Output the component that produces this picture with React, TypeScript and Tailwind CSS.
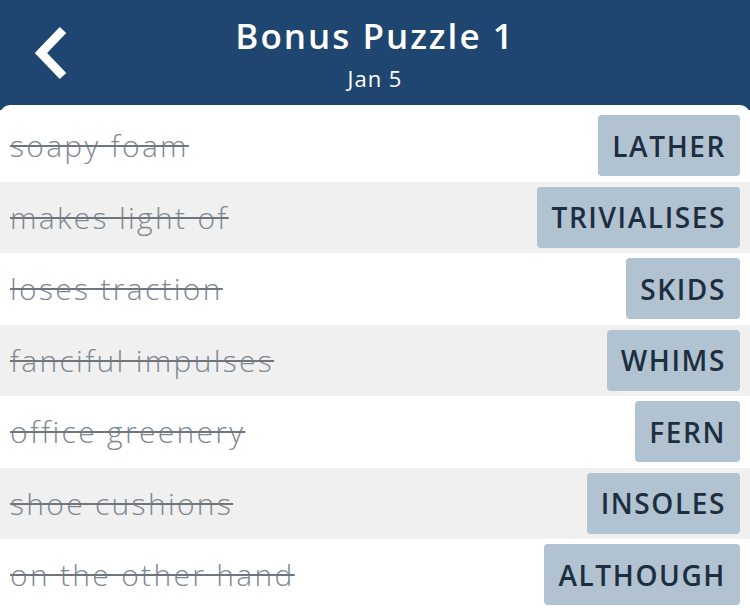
const clues = [
  { clue: "soapy foam", answer: "LATHER" },
  { clue: "makes light of", answer: "TRIVIALISES" },
  { clue: "loses traction", answer: "SKIDS" },
  { clue: "fanciful impulses", answer: "WHIMS" },
  { clue: "office greenery", answer: "FERN" },
  { clue: "shoe cushions", answer: "INSOLES" },
  { clue: "on the other hand", answer: "ALTHOUGH" },
];

export default function App() {
  return (
    <div className="h-[611px] w-[750px] overflow-hidden bg-[#1f4671] font-['Open_Sans',sans-serif]">
      <header className="relative flex h-[105px] flex-col items-center pt-[12px] text-white">
        <button className="absolute left-[30px] top-[24px]">
          <svg width="44" height="60" viewBox="0 0 44 60">
            <path
              d="M33 6 L11 29 L33 52"
              fill="none"
              stroke="white"
              strokeWidth="9"
              strokeLinecap="butt"
              strokeLinejoin="miter"
            />
          </svg>
        </button>
        <h1 className="text-[35px] font-semibold leading-[48px] tracking-[2px]">Bonus Puzzle 1</h1>
        <p className="mt-[3px] text-[22px] leading-[30px] tracking-[1px]">Jan 5</p>
      </header>
      <main className="rounded-t-[10px] bg-white pt-[5px]">
        {clues.map((c, i) => (
          <div
            key={c.clue}
            className={`flex h-[71.5px] items-center justify-between px-[10px] ${i % 2 === 1 ? "bg-[#f0f0f0]" : "bg-white"}`}
          >
            <span className="text-[30px] font-light tracking-[2.3px] text-[#7f878f] line-through decoration-[#6f767d] decoration-[1.5px]">
              {c.clue}
            </span>
            <span className="flex h-[61px] items-center rounded-[4px] bg-[#b1c2d1] px-[14px] text-[28px] font-semibold tracking-[1.6px] text-[#1d2e40]">
              {c.answer}
            </span>
          </div>
        ))}
      </main>
    </div>
  );
}
